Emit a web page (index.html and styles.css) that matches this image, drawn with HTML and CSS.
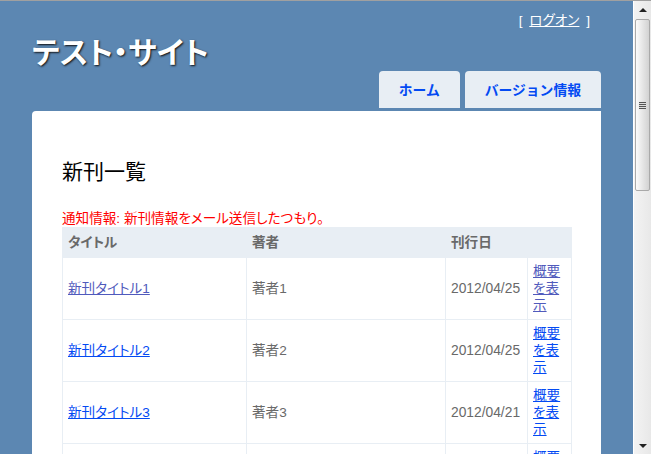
FILE: index.html
```html
<!DOCTYPE html>
<html lang="ja">
<head>
    <meta charset="UTF-8">
    <title>新刊一覧</title>
    <link rel="stylesheet" href="styles.css">
</head>
<body>
    <div class="viewport">
        <div class="page">
            <header class="header">
                <div class="header-top">
                    <h1 class="site-title">テスト・サイト</h1>
                    <div class="logindisplay">[ <a href="#">ログオン</a> ]</div>
                </div>
                <nav class="menu-bar">
                    <ul class="menu">
                        <li><a href="#">ホーム</a></li>
                        <li><a href="#">バージョン情報</a></li>
                    </ul>
                </nav>
            </header>

            <div class="main">
                <h2>新刊一覧</h2>
                <p class="message">通知情報: 新刊情報をメール送信したつもり。</p>

                <table class="books">
                    <colgroup>
                        <col class="col-title">
                        <col class="col-author">
                        <col class="col-date">
                        <col class="col-link">
                    </colgroup>
                    <tr>
                        <th>タイトル</th>
                        <th>著者</th>
                        <th>刊行日</th>
                        <th></th>
                    </tr>
                    <tr>
                        <td><a class="visited" href="#">新刊タイトル1</a></td>
                        <td>著者1</td>
                        <td class="date">2012/04/25</td>
                        <td><a class="visited" href="#">概要を表示</a></td>
                    </tr>
                    <tr>
                        <td><a href="#">新刊タイトル2</a></td>
                        <td>著者2</td>
                        <td class="date">2012/04/25</td>
                        <td><a href="#">概要を表示</a></td>
                    </tr>
                    <tr>
                        <td><a href="#">新刊タイトル3</a></td>
                        <td>著者3</td>
                        <td class="date">2012/04/21</td>
                        <td><a href="#">概要を表示</a></td>
                    </tr>
                    <tr>
                        <td><a href="#">新刊タイトル4</a></td>
                        <td>著者4</td>
                        <td class="date">2012/04/20</td>
                        <td><a href="#">概要を表示</a></td>
                    </tr>
                </table>
            </div>
        </div>
    </div>

    <!-- ウィンドウのスクロールバー -->
    <div class="scrollbar">
        <div class="sb-button"><span class="arrow-up"></span></div>
        <div class="sb-track">
            <div class="sb-thumb"><span class="grip"></span></div>
        </div>
        <div class="sb-button"><span class="arrow-down"></span></div>
    </div>
</body>
</html>
```

FILE: styles.css
```css
:root {
    --bg-color: #5c87b2;
    --tab-color: #e8eef4;
    --text-color: #696969;
}

html, body {
    height: 100%;
}

body {
    margin: 0;
    box-sizing: border-box;
    border-top: 1px solid #a0a0a0;
    background: var(--bg-color);
    font-family: "Liberation Sans", "Noto Sans CJK JP", sans-serif;
    font-size: 13.6px;
    line-height: 17px;
    font-feature-settings: "palt";
    color: var(--text-color);
    display: flex;
    overflow: hidden;
}

a:link {
    color: #034af3;
    text-decoration: underline;
}

a.visited {
    color: #505abc;
}

.viewport {
    flex: 1;
    overflow: hidden;
}

.page {
    margin: 0 32px;
}

/* ヘッダー */
.header {
    height: 110px;
    display: flex;
    flex-direction: column;
}

.header-top {
    display: flex;
    justify-content: space-between;
    align-items: flex-start;
}

.site-title {
    margin: 32px 0 0 0;
    font-family: "Noto Sans CJK JP", sans-serif;
    font-size: 30px;
    line-height: 34px;
    font-weight: bold;
    color: #fff;
    text-shadow: 1px 1px 2px #111;
}

.logindisplay {
    margin-top: 11px;
    padding-right: 11px;
    color: #fff;
    font-size: 13.6px;
}

.logindisplay a:link {
    margin: 0 3px;
    color: #fff;
}

.menu-bar {
    margin-top: auto;
}

.menu {
    margin: 0 0 3px 0;
    padding: 0;
    list-style: none;
    display: flex;
    justify-content: flex-end;
    gap: 5px;
}

.menu a:link {
    display: block;
    height: 37px;
    line-height: 37px;
    padding: 0 20px;
    background: var(--tab-color);
    color: #034af3;
    font-family: "Noto Sans CJK JP", sans-serif;
    font-size: 13.8px;
    font-weight: bold;
    font-feature-settings: normal;
    text-decoration: none;
    border-radius: 4px 4px 0 0;
}

/* メイン */
.main {
    background: #fff;
    border-radius: 4px 0 0 0;
    padding: 30px 30px 15px 30px;
}

.main h2 {
    margin: 16px 0 0 0;
    font-family: "Noto Sans CJK JP", sans-serif;
    font-size: 21px;
    line-height: 26px;
    font-weight: normal;
    color: #000;
}

.message {
    margin: 27px 0 0 0;
    color: #ff0000;
}

.books {
    width: 100%;
    table-layout: fixed;
    border-collapse: collapse;
    border: 1px solid var(--tab-color);
}

.col-title { width: 184px; }
.col-author { width: 199px; }
.col-date { width: 82px; }
.col-link { width: 44px; }

.books th {
    padding: 6px 5px;
    text-align: left;
    background: var(--tab-color);
    border: 1px solid var(--tab-color);
    font-weight: bold;
}

.books td {
    padding: 5px;
    border: 1px solid var(--tab-color);
}

.books .date {
    font-size: 13.8px;
}

/* スクロールバー */
.scrollbar {
    width: 17px;
    border-left: 1px solid #fff;
    background: linear-gradient(to right, #f3f3f3, #e8e8e8);
    display: flex;
    flex-direction: column;
}

.sb-button {
    height: 17px;
    display: flex;
    align-items: center;
    justify-content: center;
}

.arrow-up, .arrow-down {
    width: 0;
    height: 0;
    border-left: 4px solid transparent;
    border-right: 4px solid transparent;
}

.arrow-up {
    border-bottom: 4px solid #222;
}

.arrow-down {
    border-top: 4px solid #222;
}

.sb-track {
    flex: 1;
    padding: 1px 1px 0 1px;
}

.sb-thumb {
    height: 170px;
    border: 1px solid #a9a9a9;
    border-radius: 2px;
    background: linear-gradient(to right, #fbfbfb, #e6e6e6 50%, #d2d2d2);
    display: flex;
    align-items: center;
    justify-content: center;
}

.grip {
    width: 7px;
    height: 7px;
    background: repeating-linear-gradient(to bottom, #555 0, #555 1px, #ddd 1px, #ddd 2px);
}
```
